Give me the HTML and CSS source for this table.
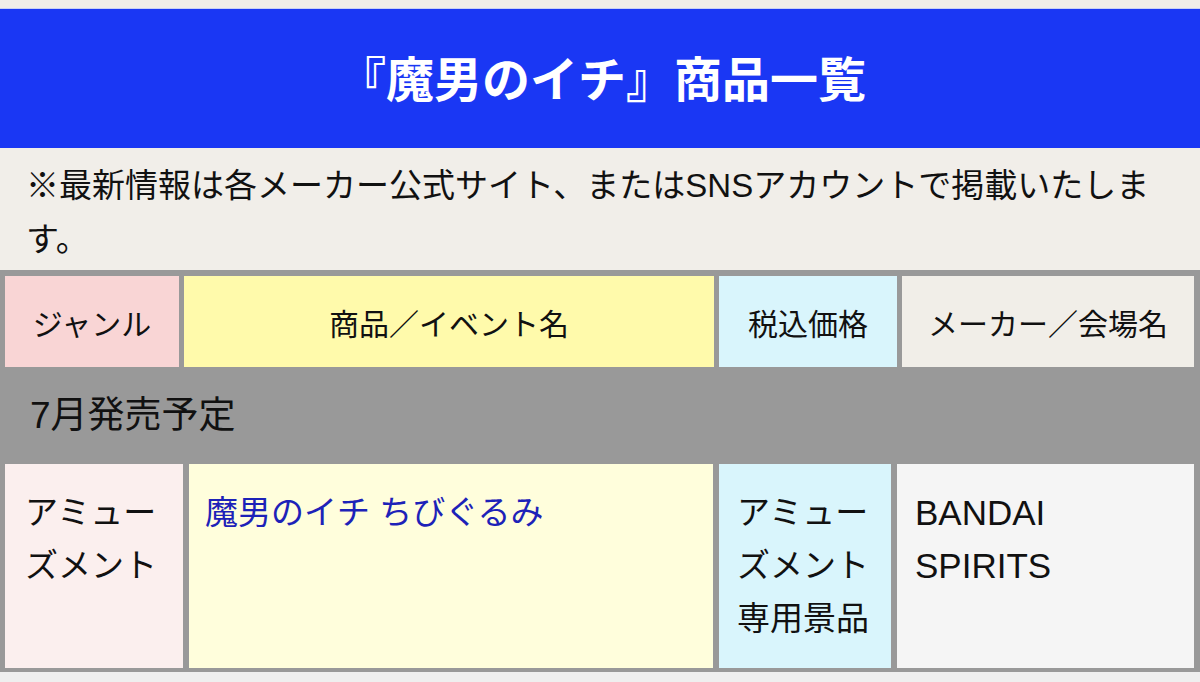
FILE: index.html
```html
<!DOCTYPE html>
<html lang="ja">
<head>
<meta charset="utf-8">
<title>『魔男のイチ』商品一覧</title>
<link rel="stylesheet" href="styles.css">
</head>
<body>
<div class="page">
  <div class="topband"></div>
  <h1 class="title">『魔男のイチ』商品一覧</h1>
  <p class="notice">※最新情報は各メーカー公式サイト、またはSNSアカウントで掲載いたします。</p>
  <div class="table">
    <div class="row head">
      <div class="cell genre">ジャンル</div>
      <div class="cell product">商品／イベント名</div>
      <div class="cell price">税込価格</div>
      <div class="cell maker">メーカー／会場名</div>
    </div>
    <div class="section">7月発売予定</div>
    <div class="row data">
      <div class="cell genre">アミューズメント</div>
      <div class="cell product"><a class="link" href="#">魔男のイチ ちびぐるみ</a></div>
      <div class="cell price">アミューズメント専用景品</div>
      <div class="cell maker">BANDAI SPIRITS</div>
    </div>
  </div>
  <div class="after"></div>
</div>
</body>
</html>
```

FILE: styles.css
```css
* { box-sizing: border-box; }
html, body {
  margin: 0;
  padding: 0;
  background: #efefef;
}
body {
  font-family: "Liberation Sans", "Noto Sans CJK JP", sans-serif;
  color: #111;
  width: 1200px;
  height: 682px;
  overflow: hidden;
}
.page {
  display: flex;
  flex-direction: column;
}
.topband {
  height: 9px;
  background: #f1eee9;
  border-bottom: 1px solid #c9d0f6;
}
.title {
  margin: 0;
  height: 139px;
  background: #1a37f4;
  color: #fff;
  font-family: "Noto Sans CJK JP", sans-serif;
  font-weight: 700;
  font-size: 48px;
  display: flex;
  align-items: center;
  justify-content: center;
  padding-left: 4px;
  padding-bottom: 6px;
}
.notice {
  margin: 0;
  background: #f1eee9;
  font-size: 33px;
  line-height: 54px;
  padding: 11px 34px 3px 26px;
  height: 122px;
}
.table {
  background: #999999;
  padding: 6px 6px 4px 5px;
  display: flex;
  flex-direction: column;
}
.row {
  display: grid;
}
.row.head {
  grid-template-columns: 174px 530px 178px 292px;
  column-gap: 5px;
  height: 91px;
}
.row.head .cell {
  font-size: 30px;
  display: flex;
  align-items: center;
  justify-content: center;
}
.row.head .genre { background: #f9d5d5; }
.row.head .product { background: #fffaab; }
.row.head .price { background: #d9f5fc; }
.row.head .maker { background: #f1eee8; }
.section {
  height: 97px;
  display: flex;
  align-items: center;
  padding-left: 25px;
  padding-bottom: 8px;
  font-size: 37px;
}
.row.data {
  grid-template-columns: 178px 524px 172px 297px;
  column-gap: 6px;
  height: 204px;
}
.row.data .cell {
  font-size: 33px;
  line-height: 53px;
  padding: 22px 18px 0 18px;
}
.row.data .genre { background: #fbefee; padding-left: 20px; }
.row.data .product { background: #fffedc; padding-left: 16px; }
.row.data .price { background: #d9f5fc; }
.row.data .maker { background: #f5f5f5; font-size: 35px; padding-right: 30px; }
.link {
  color: #1d22b8;
  text-decoration: none;
}
.after {
  height: 12px;
  background: #efefef;
}
```
